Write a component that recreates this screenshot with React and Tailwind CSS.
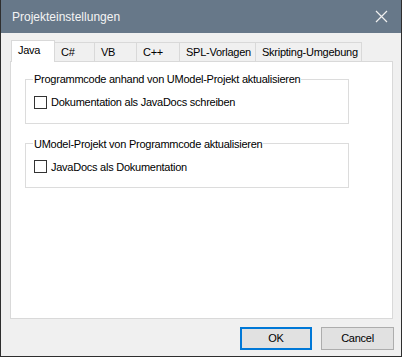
import { useState } from 'react';

const tabs = ['Java', 'C#', 'VB', 'C++', 'SPL-Vorlagen', 'Skripting-Umgebung'];
const tabWidths = ['w-[44px]', 'w-[40px]', 'w-[42px]', 'w-[43px]', 'w-[76px]', 'w-[106px]'];

const GroupBox = ({ title, label, checked, onToggle }) => (
    <fieldset className="border border-[#dcdcdc] ml-[14px] w-[324px] px-[8px] pt-[8px] pb-[12px] min-w-0">
        <legend className="px-[1px] -ml-[1px] leading-[14px]">{title}</legend>
        <label className="flex items-center gap-[4px] cursor-default">
            <span
                onClick={onToggle}
                className="w-[13px] h-[13px] border border-[#333] bg-white flex items-center justify-center"
            >
                {checked && (
                    <svg width="9" height="9" viewBox="0 0 9 9">
                        <path d="M1 4.5l2.5 2.5L8 1.5" fill="none" stroke="#000" strokeWidth="1.4" />
                    </svg>
                )}
            </span>
            <span>{label}</span>
        </label>
    </fieldset>
);

const App = () => {
    const [active, setActive] = useState(0);
    const [docs, setDocs] = useState(false);
    const [javaDocs, setJavaDocs] = useState(false);

    return (
        <div className="w-[405px] h-[359px] bg-white font-['Liberation_Sans',Arial,sans-serif] text-[11px] tracking-[-0.25px] text-black">
            <div className="w-[402px] h-[357px] flex flex-col border-x border-b border-[#2e2e2e] bg-[#f0f0f0]">
                {/* title bar */}
                <div className="h-[33px] bg-[#677889] flex items-center justify-between pl-[11px] pr-[13px] shrink-0">
                    <span className="text-[#f4f4f4] text-[12px] tracking-normal">Projekteinstellungen</span>
                    <svg width="13" height="13" viewBox="0 0 13 13">
                        <path d="M1 1l11 11M12 1L1 12" stroke="#f0f0f0" strokeWidth="1.2" />
                    </svg>
                </div>

                <div className="flex-1 flex flex-col px-[9px] pt-[7px]">
                    {/* tabs */}
                    <div className="flex items-end h-[21px] pl-[1px]">
                        {tabs.map((tab, i) => (
                            <button
                                key={tab}
                                onClick={() => setActive(i)}
                                className={
                                    i === active
                                        ? `${tabWidths[i]} h-[22px] -mb-[1px] bg-white border border-b-0 border-[#d9d9d9] text-left pl-[6px] pb-[2px] whitespace-nowrap relative z-10`
                                        : `${tabWidths[i]} h-[19px] bg-[#f0f0f0] border border-l-0 border-b-0 border-[#d9d9d9] text-left pl-[6px] whitespace-nowrap`
                                }
                            >
                                {tab}
                            </button>
                        ))}
                    </div>

                    {/* tab panel */}
                    <div className="h-[258px] bg-white border border-[#d9d9d9] w-[383px] pt-[10px] flex flex-col gap-[13px]">
                        <GroupBox
                            title="Programmcode anhand von UModel-Projekt aktualisieren"
                            label="Dokumentation als JavaDocs schreiben"
                            checked={docs}
                            onToggle={() => setDocs(!docs)}
                        />
                        <GroupBox
                            title="UModel-Projekt von Programmcode aktualisieren"
                            label="JavaDocs als Dokumentation"
                            checked={javaDocs}
                            onToggle={() => setJavaDocs(!javaDocs)}
                        />
                    </div>

                    {/* buttons */}
                    <div className="flex justify-end gap-[9px] -mr-[2px] mt-[8px]">
                        <button className="w-[72px] h-[23px] bg-[#e1e1e1] border-2 border-[#0078d7]">OK</button>
                        <button className="w-[73px] h-[23px] bg-[#e1e1e1] border border-[#adadad]">Cancel</button>
                    </div>
                </div>
            </div>
        </div>
    );
};

export default App;
